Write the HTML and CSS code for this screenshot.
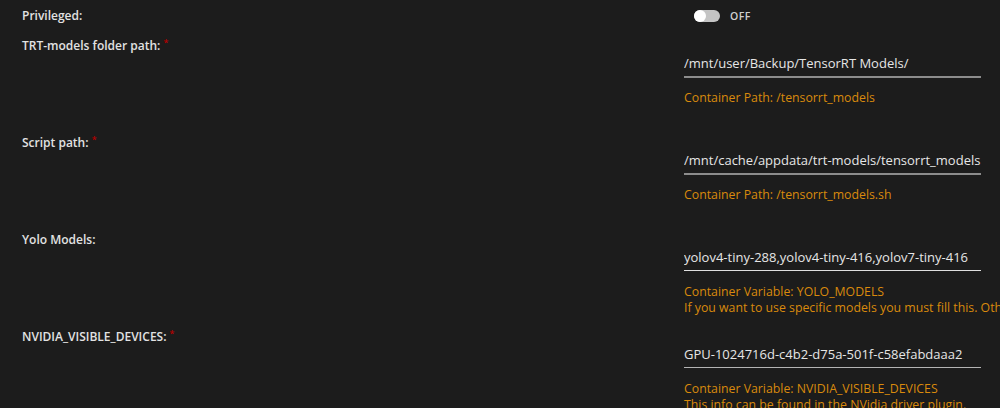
FILE: index.html
```html
<!DOCTYPE html>
<html lang="en">
<head>
  <meta charset="UTF-8" />
  <title>Update Container</title>
  <link rel="stylesheet" href="styles.css">
</head>
<body>
  <main class="form">
    <div class="row row-toggle">
      <div class="label">Privileged:</div>
      <div class="value">
        <span class="switch"><span class="knob"></span></span>
        <span class="switch-text">OFF</span>
      </div>
    </div>

    <div class="row">
      <div class="label">TRT-models folder path: <span class="req">*</span></div>
      <div class="value">
        <input type="text" class="field field-strong" value="/mnt/user/Backup/TensorRT Models/" />
        <div class="help">Container Path: /tensorrt_models</div>
      </div>
    </div>

    <div class="row">
      <div class="label">Script path: <span class="req">*</span></div>
      <div class="value">
        <input type="text" class="field field-strong" value="/mnt/cache/appdata/trt-models/tensorrt_models.sh" />
        <div class="help">Container Path: /tensorrt_models.sh</div>
      </div>
    </div>

    <div class="row">
      <div class="label">Yolo Models:</div>
      <div class="value">
        <input type="text" class="field field-light" value="yolov4-tiny-288,yolov4-tiny-416,yolov7-tiny-416" />
        <div class="help">Container Variable: YOLO_MODELS</div>
        <div class="help">If you want to use specific models you must fill this. Otherwise leave it blank to build the default models.</div>
      </div>
    </div>

    <div class="row">
      <div class="label">NVIDIA_VISIBLE_DEVICES: <span class="req">*</span></div>
      <div class="value">
        <input type="text" class="field field-mid" value="GPU-1024716d-c4b2-d75a-501f-c58efabdaaa2" />
        <div class="help">Container Variable: NVIDIA_VISIBLE_DEVICES</div>
        <div class="help">This info can be found in the NVidia driver plugin.</div>
      </div>
    </div>
  </main>
</body>
</html>
```

FILE: styles.css
```css
html, body {
  margin: 0;
  padding: 0;
  height: 100%;
  overflow: hidden;
}
body {
  background-color: #1c1c1c;
  color: #e2e2e2;
  font-family: 'Open Sans', 'Noto Sans', sans-serif;
}
.form {
  padding-left: 22px;
}
.row {
  display: grid;
  grid-template-columns: 662px 1fr;
  height: 97px;
}
.row-toggle {
  height: 36px;
  padding-top: 6px;
  box-sizing: border-box;
}
.label {
  font-size: 12px;
  font-weight: 600;
  line-height: 20px;
  white-space: nowrap;
}
.req {
  color: #b50000;
  font-size: 9px;
  vertical-align: top;
  position: relative;
  top: -3px;
}
.value {
  padding-top: 14px;
  white-space: nowrap;
}
.row-toggle .value {
  padding-top: 0;
  display: flex;
  align-items: center;
  height: 20px;
}
.switch {
  display: inline-block;
  width: 26px;
  height: 12px;
  margin-left: 10px;
  border-radius: 6px;
  background-color: #c4c4c4;
  position: relative;
}
.knob {
  position: absolute;
  left: 0;
  top: 0;
  width: 12px;
  height: 12px;
  border-radius: 6px;
  background-color: #ffffff;
}
.switch-text {
  margin-left: 10px;
  font-size: 10.5px;
  font-weight: 600;
  color: #cfcfcf;
  letter-spacing: 0.5px;
}
.field {
  display: block;
  box-sizing: border-box;
  width: 297px;
  height: 28px;
  padding: 3px 0;
  margin: 0;
  border: none;
  background: transparent;
  color: #e6e6e6;
  font-family: 'Open Sans', 'Noto Sans', sans-serif;
  font-size: 13px;
  line-height: 20px;
  outline: none;
}
.field-strong {
  border-bottom: 2px solid #8c8c8c;
}
.field-light {
  border-bottom: 1px solid #e0e0e0;
  height: 27px;
}
.field-mid {
  border-bottom: 1px solid #b4b4b4;
  height: 27px;
}
.help {
  color: #d98a0c;
  font-size: 12.3px;
  line-height: 16px;
}
.field + .help {
  margin-top: 12px;
}
.field-light + .help,
.field-mid + .help {
  margin-top: 13px;
}
```
